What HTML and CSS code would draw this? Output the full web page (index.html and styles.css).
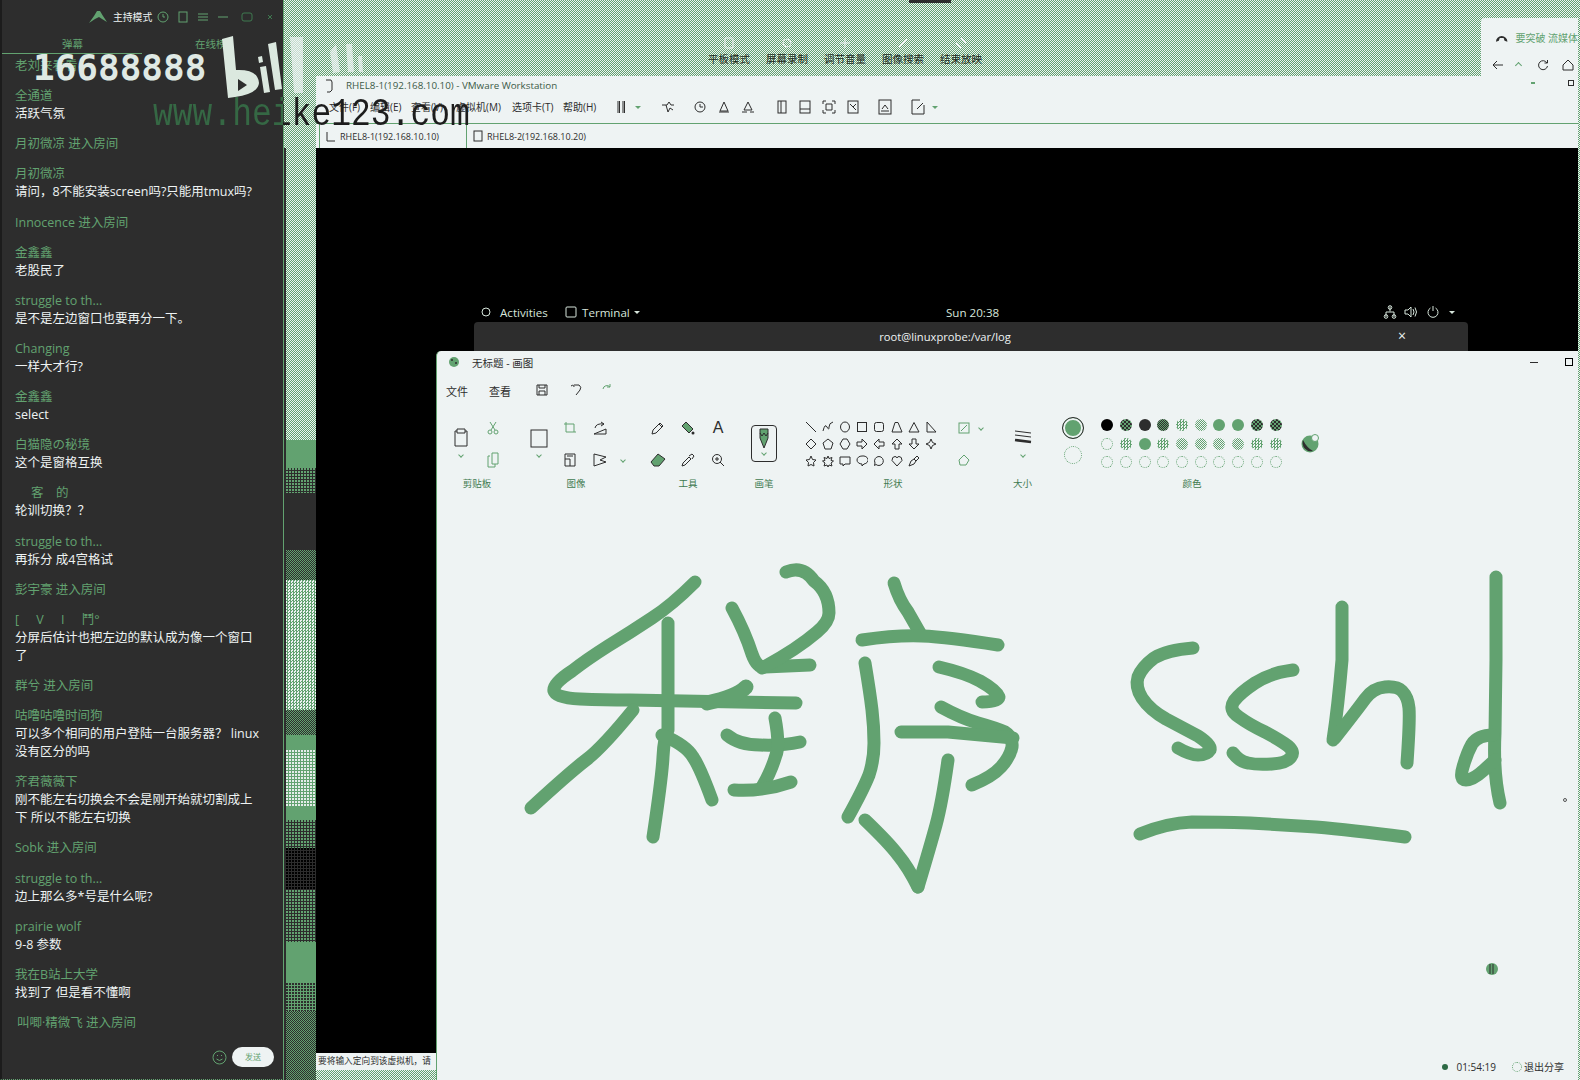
FILE: index.html
```html
<!DOCTYPE html>
<html lang="zh-CN">
<head>
    <meta charset="UTF-8">
    <title>无标题 - 画图</title>
    <link rel="stylesheet" href="styles.css">
</head>
<body>
<div class="desktop">

    <!-- wallpaper strip between the chat and the vm -->
    <div class="wall-strip">
        <div class="band dith-light h292"></div>
        <div class="band green h28"></div>
        <div class="band dith-dark h25"></div>
        <div class="band dark h57"></div>
        <div class="band dith-dark-green h30"></div>
        <div class="band dith-white h130"></div>
        <div class="band dith-dark-green h25"></div>
        <div class="band green h15"></div>
        <div class="band dots-white h57"></div>
        <div class="band green h13"></div>
        <div class="band dith-dark h28"></div>
        <div class="band dark-dots h42"></div>
        <div class="band dith-dark h52"></div>
        <div class="band green h41"></div>
        <div class="band dots-dark h28"></div>
        <div class="band dith-dark-green h69"></div>
    </div>

    <!-- quick actions on the desktop behind -->
    <div class="quick-actions">
        <div class="quick-item"><svg width="14" height="14" viewBox="0 0 14 14"><rect x="3" y="2" width="8" height="10" rx="1"/></svg><span>平板模式</span></div>
        <div class="quick-item"><svg width="14" height="14" viewBox="0 0 14 14"><circle cx="7" cy="7" r="4"/></svg><span>屏幕录制</span></div>
        <div class="quick-item"><svg width="14" height="14" viewBox="0 0 14 14"><path d="M2 7h10M7 2v10"/></svg><span>调节音量</span></div>
        <div class="quick-item"><svg width="14" height="14" viewBox="0 0 14 14"><path d="M3 11L11 3M3 3l8 8"/></svg><span>图像搜索</span></div>
        <div class="quick-item"><svg width="14" height="14" viewBox="0 0 14 14"><path d="M7 2l5 5-5 5-5-5z"/></svg><span>结束放映</span></div>
    </div>
    <div class="top-sliver"></div>

    <!-- VMware window -->
    <div class="vm-window">
        <div class="vm-title">
            <svg class="ico" width="12" height="14" viewBox="0 0 12 14"><path d="M3 1h5l1 2v8l-2 2H4"/></svg>
            <span>RHEL8-1(192.168.10.10) - VMware Workstation</span>
        </div>
        <div class="vm-toolbar">
            <span class="vm-menu">文件(F)</span>
            <span class="vm-menu">编辑(E)</span>
            <span class="vm-menu">查看(V)</span>
            <span class="vm-menu">虚拟机(M)</span>
            <span class="vm-menu">选项卡(T)</span>
            <span class="vm-menu">帮助(H)</span>
            <div class="vm-icons">
                <svg class="ico" width="12" height="14" viewBox="0 0 12 14"><path d="M3 1v12M4.500 1v12M8 1v12M9.500 1v12"/></svg>
                <span class="caret-dark tb-caret"></span>
                <svg class="ico tb-send" width="16" height="14" viewBox="0 0 16 14"><path d="M2 5h5l2-3 2 3h3M6 5l2 7 2-4 3 2"/></svg>
                <svg class="ico tb-snap" width="14" height="14" viewBox="0 0 14 14"><circle cx="7" cy="7" r="5"/><path d="M7 4v3h3"/></svg>
                <svg class="ico tb-next" width="14" height="14" viewBox="0 0 14 14"><path d="M7 2l-4 9h8zM2 12h10"/></svg>
                <svg class="ico tb-next" width="14" height="14" viewBox="0 0 14 14"><path d="M7 2L3 10h8zM1 12h5M9 12h4"/></svg>
                <svg class="ico tb-group" width="12" height="14" viewBox="0 0 12 14"><rect x="2" y="1" width="8" height="12"/><path d="M5 1v12"/></svg>
                <svg class="ico tb-pane" width="12" height="14" viewBox="0 0 12 14"><rect x="1" y="1" width="10" height="12"/><path d="M1 9h10"/></svg>
                <svg class="ico tb-pane" width="14" height="14" viewBox="0 0 14 14"><path d="M1 4V1h3M10 1h3v3M13 10v3h-3M4 13H1v-3M4 4h6v6H4z"/></svg>
                <svg class="ico tb-pane" width="12" height="14" viewBox="0 0 12 14"><rect x="1" y="1" width="10" height="12"/><path d="M3 4l6 6M9 4l-3 3"/></svg>
                <svg class="ico tb-term" width="14" height="16" viewBox="0 0 14 16"><rect x="1" y="1" width="12" height="14"/><path d="M4 10l3-4 3 4M3 12h8"/></svg>
                <svg class="ico tb-last" width="14" height="16" viewBox="0 0 14 16"><path d="M9 1H1v14h12V6M6 10l6-6"/></svg>
                <span class="caret-green"></span>
            </div>
        </div>
        <div class="vm-tabs">
            <div class="vm-tab active">
                <svg class="ico" width="10" height="12" viewBox="0 0 10 12"><path d="M1 2v9h8"/></svg>
                <span>RHEL8-1(192.168.10.10)</span>
            </div>
            <div class="vm-tab">
                <svg class="ico" width="10" height="12" viewBox="0 0 10 12"><rect x="1" y="1" width="8" height="10"/></svg>
                <span>RHEL8-2(192.168.10.20)</span>
            </div>
        </div>
        <div class="guest">
            <div class="gnome-bar">
                <svg class="g-foot" width="12" height="12" viewBox="0 0 12 12"><circle cx="6" cy="6" r="4"/></svg>
                <span class="g-activities">Activities</span>
                <svg class="g-term" width="12" height="12" viewBox="0 0 12 12"><rect x="1" y="1" width="10" height="10" rx="1"/></svg>
                <span class="g-app">Terminal</span>
                <span class="caret-light"></span>
                <span class="g-clock">Sun 20:38</span>
                <svg class="g-net" width="14" height="14" viewBox="0 0 14 14"><path d="M7 1.500v5M3 12V7h8v5"/><circle cx="7" cy="2.500" r="1.800"/><circle cx="3" cy="11.500" r="1.800"/><circle cx="11" cy="11.500" r="1.800"/></svg>
                <svg class="g-sound" width="14" height="14" viewBox="0 0 14 14"><path d="M1 5h3l3-3v10L4 9H1zM9 4q2 3 0 6M11 2.500q3 4.500 0 9"/></svg>
                <svg class="g-power" width="14" height="14" viewBox="0 0 14 14"><path d="M4.500 3a5 5 0 1 0 5 0M7 1v5"/></svg>
                <span class="caret-light g-last"></span>
            </div>
            <div class="term-window">
                <span class="term-title">root@linuxprobe:/var/log</span>
                <span class="term-close">×</span>
            </div>
        </div>
        <div class="vm-status">要将输入定向到该虚拟机，请</div>
    </div>

    <!-- browser window corner, top right -->
    <div class="browser-window">
        <div class="browser-tab">
            <svg width="14" height="12" viewBox="0 0 14 12"><path class="solid" d="M1 11a6 6 0 0 1 12 0l-3-1-1-3-4 0-1 3z"/></svg>
            <span>要突破 流媒体</span>
        </div>
        <div class="browser-nav">
            <svg class="ico" width="12" height="12" viewBox="0 0 12 12"><path d="M11 6H1M5 2L1 6l4 4"/></svg>
            <span class="nav-up"></span>
            <svg class="ico nav-reload" width="12" height="12" viewBox="0 0 12 12"><path d="M10 4a4.500 4.500 0 1 0 .5 3M10.500 1v3h-3"/></svg>
            <svg class="ico nav-home" width="12" height="12" viewBox="0 0 12 12"><path d="M1 6l5-5 5 5v5H1z"/></svg>
        </div>
        <div class="browser-extra">
            <span class="extra-dot"></span>
            <span class="extra-box"></span>
        </div>
    </div>

    <!-- Paint window -->
    <div class="paint-window">
        <div class="paint-title">
            <svg width="14" height="14" viewBox="0 0 14 14"><circle class="solid-green" cx="7" cy="7" r="5"/><circle class="solid" cx="5" cy="5" r="1"/><circle class="solid" cx="9" cy="8" r="1"/></svg>
            <span class="paint-name">无标题 - 画图</span>
            <span class="win-min"></span>
            <span class="win-max"></span>
        </div>
        <div class="paint-menu">
            <span class="pm-item">文件</span>
            <span class="pm-item">查看</span>
            <svg class="ico pm-save" width="12" height="12" viewBox="0 0 12 12"><path d="M1 1h10v10H1zM3 1v3h6V1M3 11V7h6v4"/></svg>
            <svg class="ico pm-undo" width="13" height="13" viewBox="0 0 13 13"><path d="M1 3q3-2 3 1M4 2h5q3 2 1 5l-4 5"/></svg>
            <svg class="ico faint pm-redo" width="11" height="11" viewBox="0 0 11 11"><path d="M2 6a4 4 0 0 1 7-2M9 1v3H6"/></svg>
        </div>

        <div class="ribbon">
            <div class="r-group g-clip">
                <div class="clip-grid">
                    <div class="big-cell">
                        <svg class="ico" width="16" height="20" viewBox="0 0 16 20"><path d="M4 3H2v15h12V3h-2M4 1h8v4H4z"/></svg>
                        <span class="chev"></span>
                    </div>
                    <svg class="ico faint" width="14" height="14" viewBox="0 0 14 14"><path d="M10 1L5 9M4 1l5 8"/><circle cx="4" cy="11" r="2"/><circle cx="10" cy="11" r="2"/></svg>
                    <svg class="ico faint" width="12" height="16" viewBox="0 0 12 16"><path d="M5 1h6v11H5zM3 4H1v11h7v-3"/></svg>
                </div>
                <div class="r-label">剪贴板</div>
            </div>
            <div class="r-group g-image">
                <div class="image-grid">
                    <div class="big-cell">
                        <svg class="ico" width="18" height="19" viewBox="0 0 18 19"><rect x="1" y="1" width="16" height="17"/></svg>
                        <span class="chev"></span>
                    </div>
                    <svg class="ico faint" width="14" height="14" viewBox="0 0 14 14"><path d="M3 1v10h10M1 3h10v8"/></svg>
                    <svg class="ico" width="14" height="14" viewBox="0 0 14 14"><path d="M1 13l12-5v5zM2 7q1-5 9-4M8 1l3 2-3 2"/></svg>
                    <span class="empty-cell"></span>
                    <svg class="ico" width="12" height="14" viewBox="0 0 12 14"><path d="M1 1h10v12H1zM1 6h5v7M3 3h6"/></svg>
                    <svg class="ico" width="14" height="14" viewBox="0 0 14 14"><path d="M1 1v12l12-4-6-2 6-3z"/></svg>
                    <span class="chev"></span>
                </div>
                <div class="r-label">图像</div>
            </div>
            <div class="r-group g-tools">
                <div class="tools-grid">
                    <svg class="ico" width="14" height="14" viewBox="0 0 14 14"><path d="M1 13l1-4 7-7 3 3-7 7zM8 3l3 3"/></svg>
                    <svg class="ico" width="14" height="14" viewBox="0 0 14 14"><path class="solid-green" d="M5 1l7 7-4 4-7-7z"/><circle class="solid" cx="12" cy="12" r="1.500"/></svg>
                    <span class="tool-a">A</span>
                    <svg class="ico" width="16" height="14" viewBox="0 0 16 14"><path class="solid-green" d="M1 9l7-8 7 5-6 7H4z"/></svg>
                    <svg class="ico" width="14" height="14" viewBox="0 0 14 14"><path d="M1 13l1-3 6-6 2 2-6 6zM8 3l3-2 2 2-2 3"/></svg>
                    <svg class="ico" width="14" height="14" viewBox="0 0 14 14"><circle cx="6" cy="6" r="4.500"/><path d="M4 6h4M6 4v4M9 9l4 4"/></svg>
                </div>
                <div class="r-label">工具</div>
            </div>
            <div class="r-group g-brush">
                <div class="brush-box">
                    <svg class="ico" width="12" height="22" viewBox="0 0 12 22"><path class="solid-green" d="M2 1h8v9l-4 10-4-10z"/><path d="M2 5l2 3 2-3 2 3 2-3"/></svg>
                    <span class="chev"></span>
                </div>
                <div class="r-label">画笔</div>
            </div>
            <div class="r-group g-shapes">
                <div class="shapes-row">
                    <div class="shapes-grid">
                        <svg class="ico" viewBox="0 0 12 12"><path d="M1 1l10 10"/></svg>
                        <svg class="ico" viewBox="0 0 12 12"><path d="M1 10q2-8 4-4t2 0 4-5"/></svg>
                        <svg class="ico" viewBox="0 0 12 12"><ellipse cx="6" cy="6" rx="4.500" ry="5"/></svg>
                        <svg class="ico" viewBox="0 0 12 12"><rect x="1.500" y="1.500" width="9" height="9"/></svg>
                        <svg class="ico" viewBox="0 0 12 12"><rect x="1.500" y="1.500" width="9" height="9" rx="2"/></svg>
                        <svg class="ico" viewBox="0 0 12 12"><path d="M4 1.500h3l4 9.500H1z"/></svg>
                        <svg class="ico" viewBox="0 0 12 12"><path d="M6 1.500L11 11H1z"/></svg>
                        <svg class="ico" viewBox="0 0 12 12"><path d="M2 1v10h9z"/></svg>
                        <svg class="ico" viewBox="0 0 12 12"><path d="M6 1l5 5-5 5-5-5z"/></svg>
                        <svg class="ico" viewBox="0 0 12 12"><path d="M6 1l5 4-2 6H3L1 5z"/></svg>
                        <svg class="ico" viewBox="0 0 12 12"><path d="M4 1h4l3 5-3 5H4L1 6z"/></svg>
                        <svg class="ico" viewBox="0 0 12 12"><path d="M1 4h5V1l5 5-5 5V8H1z"/></svg>
                        <svg class="ico" viewBox="0 0 12 12"><path d="M11 4H6V1L1 6l5 5V8h5z"/></svg>
                        <svg class="ico" viewBox="0 0 12 12"><path d="M6 1l5 5H8v5H4V6H1z"/></svg>
                        <svg class="ico" viewBox="0 0 12 12"><path d="M6 11l5-5H8V1H4v5H1z"/></svg>
                        <svg class="ico" viewBox="0 0 12 12"><path d="M6 1l1.500 3.500L11 6 7.500 7.500 6 11 4.500 7.500 1 6l3.500-1.500z"/></svg>
                        <svg class="ico" viewBox="0 0 12 12"><path d="M6 1l1.500 3.500 3.500.5-2.500 2.500.5 3.500L6 9.500 3 11l.5-3.500L1 5l3.500-.5z"/></svg>
                        <svg class="ico" viewBox="0 0 12 12"><path d="M6 1l1 2.500 3-1-1 3 2.500.5-2.500 2 1 3-3-1-1 2-1-2-3 1 1-3L.5 6 3 5.500l-1-3 3 1z"/></svg>
                        <svg class="ico" viewBox="0 0 12 12"><path d="M1 2h10v7H6l-2 2V9H1z"/></svg>
                        <svg class="ico" viewBox="0 0 12 12"><path d="M6 1a5 4 0 0 1 2 8l-2 2V9a5 4 0 0 1 0-8z"/></svg>
                        <svg class="ico" viewBox="0 0 12 12"><path d="M6 1.500a4.500 4.500 0 1 1-3 8l-1.500 1 .5-2.500a4.500 4.500 0 0 1 4-6.500z"/></svg>
                        <svg class="ico" viewBox="0 0 12 12"><path d="M6 11L1 5.500Q1 1.500 4 1.500 5.500 1.500 6 3 6.500 1.500 8 1.500 11 1.500 11 5.500z"/></svg>
                        <svg class="ico" viewBox="0 0 12 12"><path d="M1 11l2-5 3-2 2 2-2 3zM6 4l3-3 2 2-3 3"/></svg>
                    </div>
                    <div class="fill-col">
                        <div class="fill-item"><svg class="ico faint" width="12" height="12" viewBox="0 0 12 12"><rect x="1" y="1" width="10" height="10"/><path d="M3 9l6-6"/></svg><span class="chev"></span></div>
                        <div class="fill-item"><svg class="ico faint" width="12" height="12" viewBox="0 0 12 12"><path d="M6 1l5 5-3 5H2L1 6z"/></svg></div>
                    </div>
                </div>
                <div class="r-label">形状</div>
            </div>
            <div class="r-group g-size">
                <div class="size-cell">
                    <svg class="ico" width="18" height="14" viewBox="0 0 18 14"><path d="M1 1l16 2M1 5l16 2"/><path class="thick" d="M1 10l16 2"/></svg>
                    <span class="chev"></span>
                </div>
                <div class="r-label">大小</div>
            </div>
            <div class="r-group g-colors">
                <div class="colors-row">
                    <div class="current-cols">
                        <span class="cur-one"></span>
                        <span class="cur-two"></span>
                    </div>
                    <div class="palette">
                        <span class="sw sw-black"></span><span class="sw sw-dgreen"></span><span class="sw sw-dark"></span><span class="sw sw-mix"></span><span class="sw sw-check"></span><span class="sw sw-pale"></span><span class="sw sw-green"></span><span class="sw sw-green"></span><span class="sw sw-dgreen"></span><span class="sw sw-dgreen"></span>
                        <span class="sw sw-empty"></span><span class="sw sw-check"></span><span class="sw sw-green"></span><span class="sw sw-check"></span><span class="sw sw-pale"></span><span class="sw sw-pale"></span><span class="sw sw-pale"></span><span class="sw sw-pale"></span><span class="sw sw-check"></span><span class="sw sw-check"></span>
                        <span class="sw sw-empty"></span><span class="sw sw-empty"></span><span class="sw sw-empty"></span><span class="sw sw-empty"></span><span class="sw sw-empty"></span><span class="sw sw-empty"></span><span class="sw sw-empty"></span><span class="sw sw-empty"></span><span class="sw sw-empty"></span><span class="sw sw-empty"></span>
                    </div>
                    <svg class="wheel" width="20" height="20" viewBox="0 0 20 20"><circle class="wheel-a" cx="10" cy="11" r="8.500"/><path class="wheel-b" d="M3 7a8.500 8.500 0 0 0 10 11q-6-3-10-11z"/><circle class="wheel-c" cx="15" cy="5" r="3.500"/></svg>
                </div>
                <div class="r-label">颜色</div>
            </div>
        </div>

        <div class="canvas">
            <svg class="drawing" width="1142" height="588" viewBox="436 492 1142 588">
                <!-- 程 -->
                <path class="ink" d="M695 582Q672 605 652 618Q631 632 608 646Q586 660 572 671Q552 684 554 691Q556 698 580 699Q603 700 630 700L796 703"/>
                <path class="ink fat" d="M707 703Q738 696 746 687"/>
                <path class="ink" d="M668 623L668 730Q664 737 663 757Q662 777 653 837"/>
                <path class="ink" d="M633 710Q603 747 586 760Q569 773 531 808"/>
                <path class="ink" d="M662 735Q686 745 693 757Q700 767 712 800"/>
                <path class="ink" d="M732 608Q745 632 752 654Q757 668 765 667L810 665"/>
                <path class="ink" d="M786 572Q803 565 814 581Q829 592 829 613Q829 622 817 632Q796 650 762 668"/>
                <path class="ink" d="M727 735Q739 745 760 745Q782 746 800 742"/>
                <path class="ink" d="M775 718Q780 745 776 755Q771 772 762 787"/>
                <path class="ink" d="M734 790Q762 792 791 782"/>
                <!-- 序 -->
                <path class="ink" d="M894 583Q899 600 908 612L920 633"/>
                <path class="ink" d="M862 640Q896 635 922 636Q948 637 998 645"/>
                <path class="ink" d="M865 663Q870 693 872 710Q874 727 874 743Q874 760 869 775Q863 790 848 817"/>
                <path class="ink" d="M939 667Q965 673 980 681Q996 690 999 697Q998 702 982 702"/>
                <path class="ink" d="M941 707Q961 718 978 723Q996 728 1005 732Q1013 737 1012 747Q1010 757 1001 767Q992 777 972 785"/>
                <path class="ink" d="M901 732L948 732L1013 738"/>
                <path class="ink" d="M948 760Q942 803 936 825Q930 847 918 887"/>
                <path class="ink" d="M865 820Q889 843 898 855Q908 867 918 887"/>
                <!-- sshd -->
                <path class="ink" d="M1193 648Q1167 650 1154 658Q1142 667 1138 677Q1135 687 1142 698Q1150 710 1166 719Q1183 728 1198 736Q1212 745 1210 750Q1207 755 1198 755Q1190 755 1178 748"/>
                <path class="ink" d="M1293 670Q1270 673 1255 683Q1240 693 1234 701Q1228 710 1239 717Q1250 725 1265 732Q1280 740 1288 746Q1295 752 1291 757Q1287 763 1272 764Q1257 765 1248 763Q1240 762 1233 753"/>
                <path class="ink" d="M1342 607L1342 660Q1338 707 1333 740"/>
                <path class="ink" d="M1335 738Q1357 710 1365 699Q1373 688 1385 687Q1397 686 1402 691Q1408 697 1409 708Q1410 720 1407 763"/>
                <path class="ink" d="M1496 577L1496 660L1495 733Q1493 773 1500 803"/>
                <path class="ink" d="M1493 735Q1478 735 1472 744Q1467 753 1463 767Q1459 780 1466 780Q1473 780 1484 770L1495 760"/>
                <path class="ink" d="M1140 834Q1167 823 1192 822Q1217 822 1250 823Q1283 825 1316 827Q1350 830 1405 837"/>
                <circle class="pen-dot" cx="1492" cy="969" r="6"/>
                <path class="pen-lines" d="M1490 964v10M1493 964v10"/>
                <circle class="mini-ring" cx="1565" cy="800" r="1.500"/>
            </svg>
            <div class="share-bar">
                <span class="live-dot"></span>
                <span class="share-time">01:54:19</span>
                <span class="stop-ring"></span>
                <span class="share-text">退出分享</span>
            </div>
        </div>
    </div>

    <!-- chat panel of the live room -->
    <div class="chat-panel">
        <div class="chat-head">
            <svg class="head-logo" width="20" height="16" viewBox="0 0 20 16"><path d="M1 14l5-7 3-5h3l3 5 4 6-5-3-3-2-4 2z"/></svg>
            <span class="head-mode">主持模式</span>
            <svg class="head-ico h-first" width="12" height="12" viewBox="0 0 12 12"><circle cx="6" cy="6" r="5"/><path d="M6 3v3h2"/></svg>
            <svg class="head-ico" width="12" height="12" viewBox="0 0 12 12"><rect x="2" y="1" width="8" height="10"/></svg>
            <svg class="head-ico" width="12" height="12" viewBox="0 0 12 12"><path d="M1 3h10M1 6h10M1 9h10"/></svg>
            <svg class="head-ico" width="12" height="12" viewBox="0 0 12 12"><path d="M1 6h10"/></svg>
            <svg class="head-ico dim h-gap" width="12" height="12" viewBox="0 0 12 12"><rect x="1" y="2" width="10" height="8" rx="2"/></svg>
            <svg class="head-ico dim h-gap" width="10" height="10" viewBox="0 0 10 10"><path d="M3 3l4 4M7 3l-4 4"/></svg>
        </div>
        <div class="chat-tabs">
            <span class="chat-tab tab-first">弹幕</span>
            <span class="chat-tab tab-second">在线榜</span>
        </div>
        <div class="chat-list">
            <div class="name">老刘来看看</div>
            <div class="entry"><div class="name">全通道</div><div class="msg">活跃气氛</div></div>
            <div class="name">月初微凉 进入房间</div>
            <div class="entry"><div class="name">月初微凉</div><div class="msg">请问，8不能安装screen吗?只能用tmux吗?</div></div>
            <div class="name">Innocence 进入房间</div>
            <div class="entry"><div class="name">金鑫鑫</div><div class="msg">老股民了</div></div>
            <div class="entry"><div class="name">struggle to th...</div><div class="msg">是不是左边窗口也要再分一下。</div></div>
            <div class="entry"><div class="name">Changing</div><div class="msg">一样大才行?</div></div>
            <div class="entry"><div class="name">金鑫鑫</div><div class="msg">select</div></div>
            <div class="entry"><div class="name">白猫隐の秘境</div><div class="msg">这个是窗格互换</div></div>
            <div class="entry"><div class="name name-gap">客　的</div><div class="msg">轮训切换？？</div></div>
            <div class="entry"><div class="name">struggle to th...</div><div class="msg">再拆分 成4宫格试</div></div>
            <div class="name">彭宇豪 进入房间</div>
            <div class="entry"><div class="name name-wide">[ V I 鬥°</div><div class="msg">分屏后估计也把左边的默认成为像一个窗口了</div></div>
            <div class="name">群兮 进入房间</div>
            <div class="entry"><div class="name">咕噜咕噜时间狗</div><div class="msg">可以多个相同的用户登陆一台服务器？ linux没有区分的吗</div></div>
            <div class="entry"><div class="name">齐君薇薇下</div><div class="msg">刚不能左右切换会不会是刚开始就切割成上下 所以不能左右切换</div></div>
            <div class="name">Sobk 进入房间</div>
            <div class="entry"><div class="name">struggle to th...</div><div class="msg">边上那么多*号是什么呢?</div></div>
            <div class="entry"><div class="name">prairie wolf</div><div class="msg">9-8 参数</div></div>
            <div class="entry"><div class="name">我在B站上大学</div><div class="msg">找到了 但是看不懂啊</div></div>
            <div class="name name-last">叫唧·精微飞 进入房间</div>
        </div>
        <div class="chat-input">
            <svg class="smile" width="15" height="15" viewBox="0 0 15 15"><circle cx="7.500" cy="7.500" r="6.500"/><path d="M4.500 9q3 3 6 0M5 5.500h1M9 5.500h1"/></svg>
            <span class="send-btn">发送</span>
        </div>
    </div>

    <!-- stream watermarks over everything -->
    <svg class="bili-logo" width="160" height="72" viewBox="215 30 160 72">
        <path class="logo-a" d="M222 39l11-3 3 34q22-1 23 13-1 11-24 14l-7 1zM238 79l0 12 9-6z"/>
        <path class="logo-a" d="M258 57l4-1 1 6-4 1zM260 67l6-1 4 26-6 1zM268 44l8-2 6 47-7 1z"/>
        <path class="logo-b" d="M290 37h13v56h-9zM330 52l6-8 4 28-7 1zM346 44l6 0 2 28h-6zM358 56l4 0 1 16h-4z"/>
    </svg>
    <div class="wm-number">16688888</div>
    <div class="wm-site">www.heike123.com</div>

</div>
</body>
</html>
```

FILE: styles.css
```css
* {
    box-sizing: border-box;
}

html, body {
    margin: 0;
    padding: 0;
    background: #000;
}

body {
    font-family: "Open Sans", "Noto Sans CJK SC", sans-serif;
    color: #2d2d2d;
}

.desktop {
    position: relative;
    width: 1580px;
    height: 1080px;
    overflow: hidden;
    background: repeating-conic-gradient(#62a270 0 25%, #eef3f3 0 50%) 0 0 / 2px 2px;
}

/* wallpaper strip */
.wall-strip {
    position: absolute;
    left: 284px;
    top: 148px;
    width: 32px;
    height: 932px;
    display: flex;
    flex-direction: column;
    border-left: 2px solid #2d2d2d;
}

.band { flex: none; }
.h13 { height: 13px; }
.h15 { height: 15px; }
.h25 { height: 25px; }
.h28 { height: 28px; }
.h30 { height: 30px; }
.h41 { height: 41px; }
.h42 { height: 42px; }
.h52 { height: 52px; }
.h57 { height: 57px; }
.h69 { height: 69px; }
.h130 { height: 130px; }
.h292 { height: 292px; }

.green { background: #62a270; }
.dark { background: #2d2d2d; }
.dith-light { background: repeating-conic-gradient(#62a270 0 25%, #eef3f3 0 50%) 0 0 / 2px 2px; }
.dith-white { background: repeating-conic-gradient(#62a270 0 25%, #eef3f3 0 50%) 0 0 / 3px 3px; }
.dith-dark { background: radial-gradient(circle at 1px 1px, #62a270 .8px, transparent .9px) 0 0 / 3px 3px, #2d2d2d; }
.dith-dark-green { background: repeating-conic-gradient(#2d2d2d 0 25%, #62a270 0 50%) 0 0 / 2px 2px; }
.dots-white { background: radial-gradient(circle at 1px 1px, #eef3f3 .7px, transparent .8px) 0 0 / 3px 3px, #62a270; }
.dots-dark { background: radial-gradient(circle at 1px 1px, #2d2d2d .8px, transparent .9px) 0 0 / 3px 3px, #62a270; }
.dark-dots { background: radial-gradient(circle at 1px 1px, #000 .8px, transparent .9px) 0 0 / 3px 3px, #2d2d2d; }

/* quick actions */
.quick-actions {
    position: absolute;
    left: 708px;
    top: 36px;
    display: flex;
    gap: 16px;
}

.quick-item {
    width: 42px;
    display: flex;
    flex-direction: column;
    align-items: center;
    font-size: 10.5px;
    line-height: 14px;
    color: #1d2a22;
    gap: 2px;
}

.quick-item svg {
    fill: none;
    stroke: #eef3f3;
}

.top-sliver {
    position: absolute;
    left: 909px;
    top: 0;
    width: 42px;
    height: 3px;
    background: #2d2d2d;
}

/* VMware */
.vm-window {
    position: absolute;
    left: 316px;
    top: 76px;
    width: 1262px;
    height: 994px;
    display: flex;
    flex-direction: column;
    background: #eef3f3;
}

.ico {
    fill: none;
    stroke: #2d2d2d;
    stroke-width: 1;
    flex: none;
}

.ico.faint {
    stroke: #62a270;
}

.solid { fill: #2d2d2d; stroke: none; }
.solid-green { fill: #62a270; }
.thick { stroke-width: 2.500; }

.vm-title {
    height: 19px;
    flex: none;
    display: flex;
    align-items: center;
    gap: 11px;
    padding-left: 7px;
    font-size: 9.800px;
    color: #3c5a47;
}

.vm-toolbar {
    height: 29px;
    flex: none;
    display: flex;
    align-items: flex-start;
    padding: 4px 0 0 13px;
    font-size: 10px;
    line-height: 16px;
    color: #2d2d2d;
    border-bottom: 1px solid #62a270;
}

.vm-menu {
    width: 41px;
    white-space: nowrap;
}

.vm-menu:nth-child(3) { width: 45px; }
.vm-menu:nth-child(4) { width: 56px; }
.vm-menu:nth-child(5) { width: 51px; }
.vm-menu:nth-child(6) { width: 37px; }

.vm-icons {
    display: flex;
    align-items: center;
    height: 16px;
    margin-left: 15px;
}

.caret-dark {
    width: 0;
    height: 0;
    border: 3px solid transparent;
    border-top-color: #62a270;
    border-bottom-width: 0;
}

.tb-caret { margin-left: 8px; }
.tb-send { margin-left: 19px; }
.tb-snap { margin-left: 17px; }
.tb-next { margin-left: 10px; }
.tb-group { margin-left: 21px; }
.tb-pane { margin-left: 11px; }
.tb-term { margin-left: 19px; }
.tb-last { margin-left: 19px; }

.caret-green {
    width: 0;
    height: 0;
    margin-left: 7px;
    border: 3px solid transparent;
    border-top-color: #62a270;
    border-bottom-width: 0;
}

.vm-tabs {
    height: 24px;
    flex: none;
    display: flex;
    padding-left: 3px;
    font-size: 9px;
    color: #2d2d2d;
    background: radial-gradient(circle at 1px 1px, #62a270 .6px, transparent .7px) 0 0 / 5px 4px, #eef3f3;
}

.vm-tab {
    display: flex;
    align-items: center;
    gap: 4px;
    padding: 0 6px;
    white-space: nowrap;
}

.vm-tab.active {
    width: 148px;
    background: #eef3f3;
    border-right: 1px solid #62a270;
    border-left: 1px solid #62a270;
}

.guest {
    flex: 1;
    background: #000;
    padding-top: 154px;
}

.gnome-bar {
    height: 20px;
    display: flex;
    align-items: center;
    padding-left: 164px;
    font-size: 11.600px;
    color: #d7e6dc;
}

.gnome-bar svg {
    fill: none;
    stroke: #d7e6dc;
    flex: none;
}

.g-activities { margin-left: 8px; width: 50px; }
.g-term { margin-left: 15px; }
.g-app { margin-left: 5px; width: 48px; }

.caret-light {
    width: 0;
    height: 0;
    margin-left: 4px;
    border: 3px solid transparent;
    border-top-color: #d7e6dc;
    border-bottom-width: 0;
}

.g-clock { margin-left: 306px; width: 58px; }
.gnome-bar .g-net { margin-left: 379px; }
.gnome-bar .g-sound { margin-left: 7px; }
.gnome-bar .g-power { margin-left: 8px; }
.g-last { margin-left: 9px; }

.term-window {
    position: relative;
    margin: 0 0 0 158px;
    width: 994px;
    height: 29px;
    display: flex;
    align-items: center;
    justify-content: center;
    padding-right: 52px;
    background: #2d2d2d;
    border-radius: 4px 4px 0 0;
    font-size: 11.200px;
    color: #eef3f3;
}

.term-close {
    position: absolute;
    left: 924px;
    top: 6px;
    font-size: 14px;
    line-height: 16px;
}

.vm-status {
    height: 17px;
    flex: none;
    width: 120px;
    padding-left: 2px;
    font-size: 8.700px;
    line-height: 17px;
    white-space: nowrap;
    overflow: hidden;
    background: #eef3f3;
}

/* browser corner */
.browser-window {
    position: absolute;
    left: 1481px;
    top: 18px;
    width: 97px;
    height: 76px;
    background: #eef3f3;
    border-radius: 4px 0 0 0;
}

.browser-tab {
    height: 36px;
    display: flex;
    align-items: center;
    gap: 7px;
    padding: 2px 0 0 14px;
    font-size: 10px;
    color: #62a270;
    white-space: nowrap;
    overflow: hidden;
}

.browser-nav {
    height: 22px;
    display: flex;
    align-items: center;
    padding-left: 11px;
}

.nav-up {
    width: 5px;
    height: 5px;
    margin-left: 12px;
    border-top: 1px solid #62a270;
    border-left: 1px solid #62a270;
    transform: rotate(45deg);
}

.nav-reload { margin-left: 16px; }
.nav-home { margin-left: 13px; }

.browser-extra {
    display: flex;
    align-items: center;
    height: 14px;
    padding-left: 50px;
}

.extra-dot {
    width: 4px;
    height: 2px;
    background: #62a270;
}

.extra-box {
    width: 6px;
    height: 6px;
    margin-left: 33px;
    border: 1px solid #2d2d2d;
}

/* Paint */
.paint-window {
    position: absolute;
    left: 436px;
    top: 351px;
    width: 1142px;
    height: 729px;
    display: flex;
    flex-direction: column;
    background: #eef3f3;
    border-top-left-radius: 5px;
    border-left: 1px solid #62a270;
}

.paint-title {
    height: 24px;
    flex: none;
    display: flex;
    align-items: center;
    padding: 0 5px 2px 10px;
    font-size: 10.500px;
}

.paint-name {
    margin-left: 11px;
    white-space: nowrap;
}

.win-min {
    width: 8px;
    height: 1px;
    margin-left: auto;
    background: #2d2d2d;
}

.win-max {
    width: 8px;
    height: 8px;
    margin-left: 27px;
    border: 1px solid #000;
}

.paint-menu {
    height: 32px;
    flex: none;
    display: flex;
    align-items: center;
    padding-left: 9px;
    font-size: 11px;
}

.pm-item { width: 43px; }
.pm-save { margin-left: 4px; margin-top: -2px; }
.pm-undo { margin-left: 22px; margin-top: -3px; }
.pm-redo { margin-left: 18px; margin-top: -6px; }

.ribbon {
    height: 85px;
    flex: none;
    display: flex;
    padding: 5px 0 0 8px;
}

.r-group {
    flex: none;
    display: flex;
    flex-direction: column;
}

.r-label {
    height: 16px;
    text-align: center;
    font-size: 9.500px;
    line-height: 16px;
    color: #3f7a50;
}

.g-clip { width: 64px; }
.g-image { width: 108px; margin-left: 13px; }
.g-tools { width: 86px; margin-left: 15px; }
.g-brush { width: 26px; margin-left: 20px; }
.g-shapes { width: 182px; margin-left: 25px; }
.g-size { width: 35px; margin-left: 21px; }
.g-colors { width: 264px; margin-left: 20px; }

.clip-grid, .image-grid, .tools-grid {
    height: 64px;
    display: grid;
    grid-template-rows: 32px 32px;
    justify-items: center;
    align-items: center;
}

.clip-grid { grid-template-columns: 32px 32px; }
.image-grid { grid-template-columns: 34px 28px 32px 14px; }
.tools-grid { grid-template-columns: 26px 34px 26px; }

.big-cell {
    grid-row: span 2;
    display: flex;
    flex-direction: column;
    align-items: center;
    gap: 5px;
    margin-top: -3px;
}

.chev {
    width: 4px;
    height: 4px;
    border-right: 1px solid #62a270;
    border-bottom: 1px solid #62a270;
    transform: rotate(45deg);
    flex: none;
}

.tool-a {
    font-size: 16px;
    line-height: 16px;
    font-family: "Liberation Sans", sans-serif;
}

.brush-box {
    height: 37px;
    margin-top: 13px;
    margin-bottom: 14px;
    display: flex;
    flex-direction: column;
    align-items: center;
    padding-top: 2px;
    gap: 1px;
    border: 1px solid #2d2d2d;
    border-radius: 4px;
}

.shapes-row {
    height: 64px;
    display: flex;
}

.shapes-grid {
    width: 138px;
    height: 51px;
    margin-top: 6px;
    display: grid;
    grid-template-columns: repeat(8, 17.200px);
    grid-auto-rows: 17px;
    justify-items: center;
    align-items: center;
}

.shapes-grid svg {
    width: 12px;
    height: 12px;
}

.fill-col {
    margin-left: 18px;
    display: grid;
    grid-template-rows: 32px 32px;
    align-items: center;
}

.fill-item {
    display: flex;
    align-items: center;
    gap: 9px;
}

.size-cell {
    height: 64px;
    padding-top: 18px;
    display: flex;
    flex-direction: column;
    align-items: center;
    gap: 9px;
}

.colors-row {
    height: 64px;
    display: flex;
}

.current-cols {
    width: 26px;
    display: flex;
    flex-direction: column;
    align-items: center;
    padding-top: 5px;
    gap: 7px;
}

.cur-one {
    width: 22px;
    height: 22px;
    border-radius: 50%;
    background: #62a270;
    box-shadow: inset 0 0 0 2px #eef3f3;
    border: 1px solid #2d2d2d;
}

.cur-two {
    width: 18px;
    height: 18px;
    border-radius: 50%;
    border: 1px dotted #62a270;
}

.palette {
    width: 187px;
    margin-left: 12px;
    padding-top: 4px;
    display: grid;
    grid-template-columns: repeat(10, 18.700px);
    grid-auto-rows: 18.500px;
    justify-items: center;
    align-items: center;
}

.sw {
    width: 12px;
    height: 12px;
    border-radius: 50%;
}

.sw-black { background: #000; }
.sw-dark { background: #2d2d2d; }
.sw-green { background: #62a270; }
.sw-dgreen { background: repeating-conic-gradient(#2d2d2d 0 25%, #62a270 0 50%) 0 0 / 4px 4px, #62a270; }
.sw-mix { background: repeating-conic-gradient(#2d2d2d 0 25%, #62a270 0 50%) 0 0 / 2px 2px; }
.sw-check { background: repeating-conic-gradient(#62a270 0 25%, #eef3f3 0 50%) 0 0 / 3px 3px; }
.sw-pale { background: repeating-conic-gradient(#62a270 0 25%, #eef3f3 0 50%) 0 0 / 2px 2px; }
.sw-empty { border: 1px dotted #62a270; }

.wheel {
    flex: none;
    margin: 21px 0 0 15px;
}

.wheel-a { fill: #62a270; }
.wheel-b { fill: #2d2d2d; }
.wheel-c { fill: #eef3f3; stroke: #62a270; }

.canvas {
    position: relative;
    flex: 1;
    margin-left: -1px;
}

.drawing {
    display: block;
}

.ink {
    fill: none;
    stroke: #62a270;
    stroke-width: 13;
    stroke-linecap: round;
    stroke-linejoin: round;
}

.ink.fat { stroke-width: 15; }
.pen-dot { fill: #62a270; }
.pen-lines { stroke: #2d2d2d; stroke-width: 1; fill: none; }
.mini-ring { fill: none; stroke: #2d2d2d; stroke-width: .8; }

.share-bar {
    position: absolute;
    right: 14px;
    bottom: 5px;
    display: flex;
    align-items: center;
    font-size: 10px;
    line-height: 16px;
}

.live-dot {
    width: 6px;
    height: 6px;
    border-radius: 50%;
    background: #2d6a45;
}

.share-time { margin-left: 8px; }

.stop-ring {
    width: 10px;
    height: 10px;
    margin-left: 16px;
    border-radius: 50%;
    border: 1px dotted #62a270;
}

.share-text { margin-left: 2px; }

/* chat panel */
.chat-panel {
    position: absolute;
    left: 0;
    top: 0;
    width: 284px;
    height: 1080px;
    display: flex;
    flex-direction: column;
    border-right: 1px solid #62a270;
    border-left: 2px solid #1c1c1c;
    border-bottom: 1px dotted #62a270;
    background: radial-gradient(circle at 1px 1px, #0e0e0e .6px, transparent .7px) 0 0 / 4px 4px, radial-gradient(circle at 1px 1px, #0e0e0e .6px, transparent .7px) 2px 2px / 4px 4px, #2d2d2d;
}

.chat-head {
    height: 33px;
    flex: none;
    display: flex;
    align-items: center;
    padding-left: 86px;
    font-size: 9.800px;
    color: #eef3f3;
}

.head-logo { fill: #62a270; flex: none; }
.head-mode { margin-left: 5px; width: 40px; white-space: nowrap; }

.head-ico {
    flex: none;
    margin-left: 8px;
    fill: none;
    stroke: #62a270;
}

.head-ico.h-first { margin-left: 4px; }
.head-ico.dim { stroke: #3f7a50; }
.head-ico.h-gap { margin-left: 12px; }

.chat-tabs {
    height: 21px;
    flex: none;
    display: flex;
    align-items: center;
    font-size: 10.500px;
    color: #62a270;
    background: linear-gradient(#62a270, #62a270) 0 100% / 140px 1px no-repeat;
}

.chat-tab {
    flex: none;
    white-space: nowrap;
}

.tab-first { margin-left: 60px; }
.tab-second { margin-left: 112px; }

.chat-list {
    padding: 3px 22px 0 13px;
    display: flex;
    flex-direction: column;
    gap: 12.150px;
    font-size: 12.500px;
    line-height: 18px;
}

.name {
    color: #62a270;
    white-space: nowrap;
}

.name-gap { padding-left: 16px; }
.name-wide { word-spacing: 14px; }
.name-last { padding-left: 2px; }

.msg {
    color: #eef3f3;
}

.chat-input {
    position: absolute;
    right: 9px;
    bottom: 12px;
    display: flex;
    align-items: center;
    gap: 5px;
}

.smile {
    fill: none;
    stroke: #62a270;
}

.send-btn {
    width: 42px;
    height: 20px;
    border-radius: 10px;
    text-align: center;
    font-size: 8px;
    line-height: 20px;
    color: #62a270;
    background: #eef3f3;
}

/* watermarks */
.bili-logo {
    position: absolute;
    left: 215px;
    top: 30px;
}

.logo-a {
    fill: #dbe8df;
    fill-rule: evenodd;
}

.logo-b { fill: #eef3f3; opacity: .7; }

.wm-number {
    position: absolute;
    left: 33px;
    top: 47px;
    font-family: "DejaVu Sans Mono", monospace;
    font-weight: bold;
    font-size: 36px;
    line-height: 42px;
    color: #dfe9e4;
}

.wm-site {
    position: absolute;
    left: 153px;
    top: 96px;
    font-family: "Liberation Mono", monospace;
    font-size: 33px;
    line-height: 40px;
    transform: scaleY(1.150);
    background: linear-gradient(to right, #356844 0 130px, #1d1d1d 130px);
    -webkit-background-clip: text;
    background-clip: text;
    color: transparent;
}
```
